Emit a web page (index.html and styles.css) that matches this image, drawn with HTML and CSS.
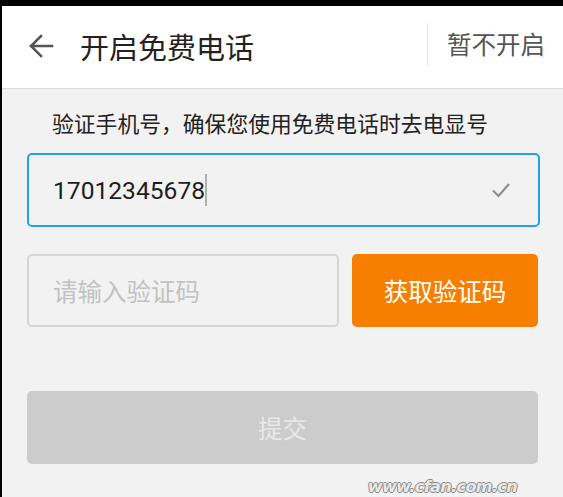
FILE: index.html
```html
<!DOCTYPE html>
<html lang="zh-CN">
<head>
<meta charset="utf-8">
<title>开启免费电话</title>
<link rel="stylesheet" href="styles.css">
</head>
<body>
<div class="app">
  <header class="header">
    <svg class="back" width="26" height="26" viewBox="0 0 26 26" aria-hidden="true">
      <path d="M24 13H3M13 3L3 13l10 10" fill="none" stroke="#555" stroke-width="2.6" stroke-linecap="square"/>
    </svg>
    <h1 class="title">开启免费电话</h1>
    <div class="divider"></div>
    <span class="skip">暂不开启</span>
  </header>
  <main class="content">
    <p class="subtitle">验证手机号，确保您使用免费电话时去电显号</p>
    <div class="field field-active">
      <span class="phone">17012345678</span><span class="caret"></span>
      <svg class="check" width="20" height="16" viewBox="0 0 20 16" aria-hidden="true">
        <path d="M2 8.5l5.5 5.5L18 2" fill="none" stroke="#8a8a8a" stroke-width="2"/>
      </svg>
    </div>
    <div class="row">
      <div class="field field-code"><span class="placeholder">请输入验证码</span></div>
      <button class="btn btn-orange">获取验证码</button>
    </div>
    <button class="btn btn-submit">提交</button>
  </main>
  <div class="watermark">www.cfan.com.cn</div>
</div>
</body>
</html>
```
FILE: styles.css
```css
* { box-sizing: border-box; }
html, body { margin: 0; padding: 0; }
body {
  background: #000;
  font-family: "Noto Sans CJK SC", "Noto Sans", sans-serif;
  width: 563px;
  height: 497px;
  overflow: hidden;
}
.app {
  margin-top: 6px;
  margin-left: 2px;
  height: 491px;
  background: #f2f2f2;
  position: relative;
}
.header {
  height: 83px;
  background: #fff;
  border-bottom: 1px solid #dcdcdc;
  display: flex;
  align-items: center;
}
.back { margin-left: 26px; margin-top: -2px; }
.title {
  margin: -2px 0 0 26px;
  font-size: 29px;
  font-weight: normal;
  color: #222;
  line-height: 40px;
}
.divider {
  margin-left: auto;
  width: 1px;
  height: 43px;
  background: #e4e4e4;
  margin-top: -6px;
}
.skip {
  margin: -6px 18px 0 19px;
  font-size: 24.5px;
  color: #555;
  line-height: 34px;
}
.content { padding: 0 23px 0 25px; }
.subtitle {
  margin: 0;
  height: 64px;
  padding: 19px 0 0 25px;
  font-size: 21.8px;
  line-height: 30px;
  color: #222;
}
.field {
  height: 74px;
  border: 2px solid #d6d6d6;
  border-radius: 5px;
  display: flex;
  align-items: center;
  padding-left: 24px;
  background: #f2f2f2;
}
.field-active { border-color: #22a0e8; padding-right: 27px; }
.phone {
  font-family: Roboto, "Noto Sans", sans-serif;
  font-size: 24.6px;
  color: #1e1e1e;
}
.caret {
  width: 2px;
  height: 32px;
  background: #b0b0b0;
  margin-left: 0;
}
.check { margin-left: auto; }
.row {
  display: flex;
  gap: 13px;
  margin-top: 27px;
  height: 73px;
}
.field-code { width: 312px; height: 73px; }
.placeholder { font-size: 24.5px; color: #c2c2c2; }
.btn {
  border: 0;
  border-radius: 5px;
  font-family: "Noto Sans CJK SC", sans-serif;
  font-size: 24.5px;
  padding: 0;
}
.btn-orange {
  width: 186px;
  background: #f77f00;
  color: #fff;
}
.btn-submit {
  display: block;
  margin-top: 64px;
  width: 511px;
  height: 73px;
  background: #cccccc;
  color: #e8e8e8;
}
.watermark {
  position: absolute;
  right: 46px;
  bottom: 1px;
  font-family: "DejaVu Sans", sans-serif;
  font-style: italic;
  font-weight: bold;
  font-size: 16px;
  color: #e8e8e8;
  text-shadow: 1px 0 0 #8a8a8a, -1px 0 0 #8a8a8a, 0 1px 0 #8a8a8a, 0 -1px 0 #8a8a8a;
  letter-spacing: -0.6px;
}
```
